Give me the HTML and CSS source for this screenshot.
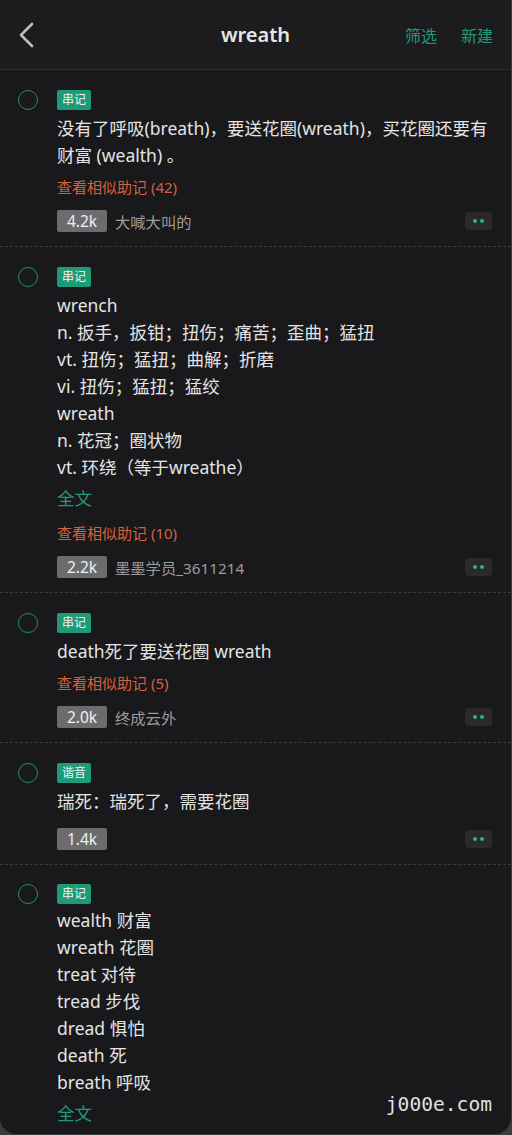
FILE: index.html
```html
<!DOCTYPE html>
<html lang="zh">
<head>
<meta charset="utf-8">
<title>wreath</title>
<link rel="stylesheet" href="styles.css">
</head>
<body>
<div class="app">
  <header class="topbar">
    <svg class="back" width="18" height="28" viewBox="0 0 18 28"><path d="M15 3 L4 14 L15 25" fill="none" stroke="#bdbdbd" stroke-width="2.6" stroke-linecap="round" stroke-linejoin="round"/></svg>
    <h1 class="title">wreath</h1>
    <div class="actions"><span>筛选</span><span>新建</span></div>
  </header>

  <main class="list">
    <section class="item">
      <span class="check"></span>
      <div class="body">
        <span class="tag">串记</span>
        <p class="text">没有了呼吸(breath)，要送花圈(wreath)，买花圈还要有财富 (wealth) 。</p>
        <a class="similar">查看相似助记 (42)</a>
        <div class="meta"><span class="count">4.2k</span><span class="author">大喊大叫的</span><span class="more"><i></i><i></i></span></div>
      </div>
    </section>

    <section class="item">
      <span class="check"></span>
      <div class="body">
        <span class="tag">串记</span>
        <p class="text">wrench<br>n. 扳手，扳钳；扭伤；痛苦；歪曲；猛扭<br>vt. 扭伤；猛扭；曲解；折磨<br>vi. 扭伤；猛扭；猛绞<br>wreath<br>n. 花冠；圈状物<br>vt. 环绕（等于wreathe）</p>
        <a class="full">全文</a>
        <a class="similar">查看相似助记 (10)</a>
        <div class="meta"><span class="count">2.2k</span><span class="author">墨墨学员_3611214</span><span class="more"><i></i><i></i></span></div>
      </div>
    </section>

    <section class="item">
      <span class="check"></span>
      <div class="body">
        <span class="tag">串记</span>
        <p class="text">death死了要送花圈 wreath</p>
        <a class="similar">查看相似助记 (5)</a>
        <div class="meta"><span class="count">2.0k</span><span class="author">终成云外</span><span class="more"><i></i><i></i></span></div>
      </div>
    </section>

    <section class="item">
      <span class="check"></span>
      <div class="body">
        <span class="tag">谐音</span>
        <p class="text">瑞死：瑞死了，需要花圈</p>
        <div class="meta"><span class="count">1.4k</span><span class="author"></span><span class="more"><i></i><i></i></span></div>
      </div>
    </section>

    <section class="item last">
      <span class="check"></span>
      <div class="body">
        <span class="tag">串记</span>
        <p class="text">wealth 财富<br>wreath 花圈<br>treat 对待<br>tread 步伐<br>dread 惧怕<br>death 死<br>breath 呼吸</p>
        <a class="full">全文</a>
      </div>
    </section>
  </main>
  <div class="watermark">j000e.com</div>
</div>
</body>
</html>
```

FILE: styles.css
```css
* { box-sizing: border-box; }
html, body { margin: 0; padding: 0; }
body {
  width: 512px;
  height: 1135px;
  background: #3c3c3e;
  font-family: "Noto Sans", "Noto Sans CJK SC", sans-serif;
  overflow: hidden;
}
.app {
  position: relative;
  width: 511px;
  height: 1134px;
  background: #19181b;
  border-bottom-left-radius: 16px;
  border-bottom-right-radius: 16px;
  overflow: hidden;
}
.topbar {
  height: 70px;
  background: #1c1c1e;
  border-bottom: 1px solid #2e2e30;
  display: flex;
  align-items: center;
  padding: 0 18px 0 17px;
  position: relative;
}
.back { display: block; }
.title {
  position: absolute;
  left: 0; right: 0; top: 0;
  margin: 0;
  text-align: center;
  line-height: 70px;
  font-size: 20px;
  font-weight: 600;
  color: #e6e6e6;
  pointer-events: none;
}
.actions {
  margin-left: auto;
  display: flex;
  gap: 24px;
  font-size: 16px;
  color: #22997a;
}
.list { display: flex; flex-direction: column; }
.item {
  display: flex;
  gap: 19px;
  padding: 20px 19px 14px 18px;
  border-bottom: 1px dashed #3a3a3c;
}
.item.last { border-bottom: none; padding-top: 19px; }
.item.last .tag { margin-bottom: 3px; }
.check {
  flex: none;
  width: 20px;
  height: 20px;
  border: 1.6px solid #1f8f6f;
  border-radius: 50%;
}
.body { flex: 1; display: flex; flex-direction: column; align-items: flex-start; }
.tag {
  display: inline-block;
  height: 20px;
  line-height: 20px;
  padding: 0 5px;
  font-size: 12px;
  color: #f2f2f2;
  background: #1d9a77;
  border-radius: 2px;
  margin-bottom: 5px;
}
.text {
  margin: 0;
  font-size: 17.5px;
  line-height: 27px;
  color: #e4e4e4;
}
.full {
  margin: 4px 0 3px;
  font-size: 17.5px;
  line-height: 27px;
  color: #22997a;
}
.similar {
  margin-top: 8px;
  font-size: 15px;
  line-height: 20px;
  color: #d6603a;
}
.meta {
  align-self: stretch;
  display: flex;
  align-items: center;
  margin-top: 13px;
}
.count {
  display: inline-block;
  width: 50px;
  height: 22px;
  line-height: 22px;
  text-align: center;
  font-size: 15.5px;
  color: #f0f0f0;
  background: #6c6c6e;
  border-radius: 2px;
}
.author {
  margin-left: 8px;
  font-size: 15.3px;
  color: #9c9c9e;
}
.more {
  margin-left: auto;
  width: 27px;
  height: 18px;
  border-radius: 4px;
  background: #2a2a2c;
  display: flex;
  align-items: center;
  justify-content: center;
  gap: 3px;
}
.more i {
  width: 4px; height: 4px;
  border-radius: 50%;
  background: #25b888;
}
.watermark {
  position: absolute;
  right: 19px;
  bottom: 18px;
  font-family: "DejaVu Sans Mono", "Liberation Mono", monospace;
  font-size: 19.6px;
  color: #e0e0e0;
}
```
